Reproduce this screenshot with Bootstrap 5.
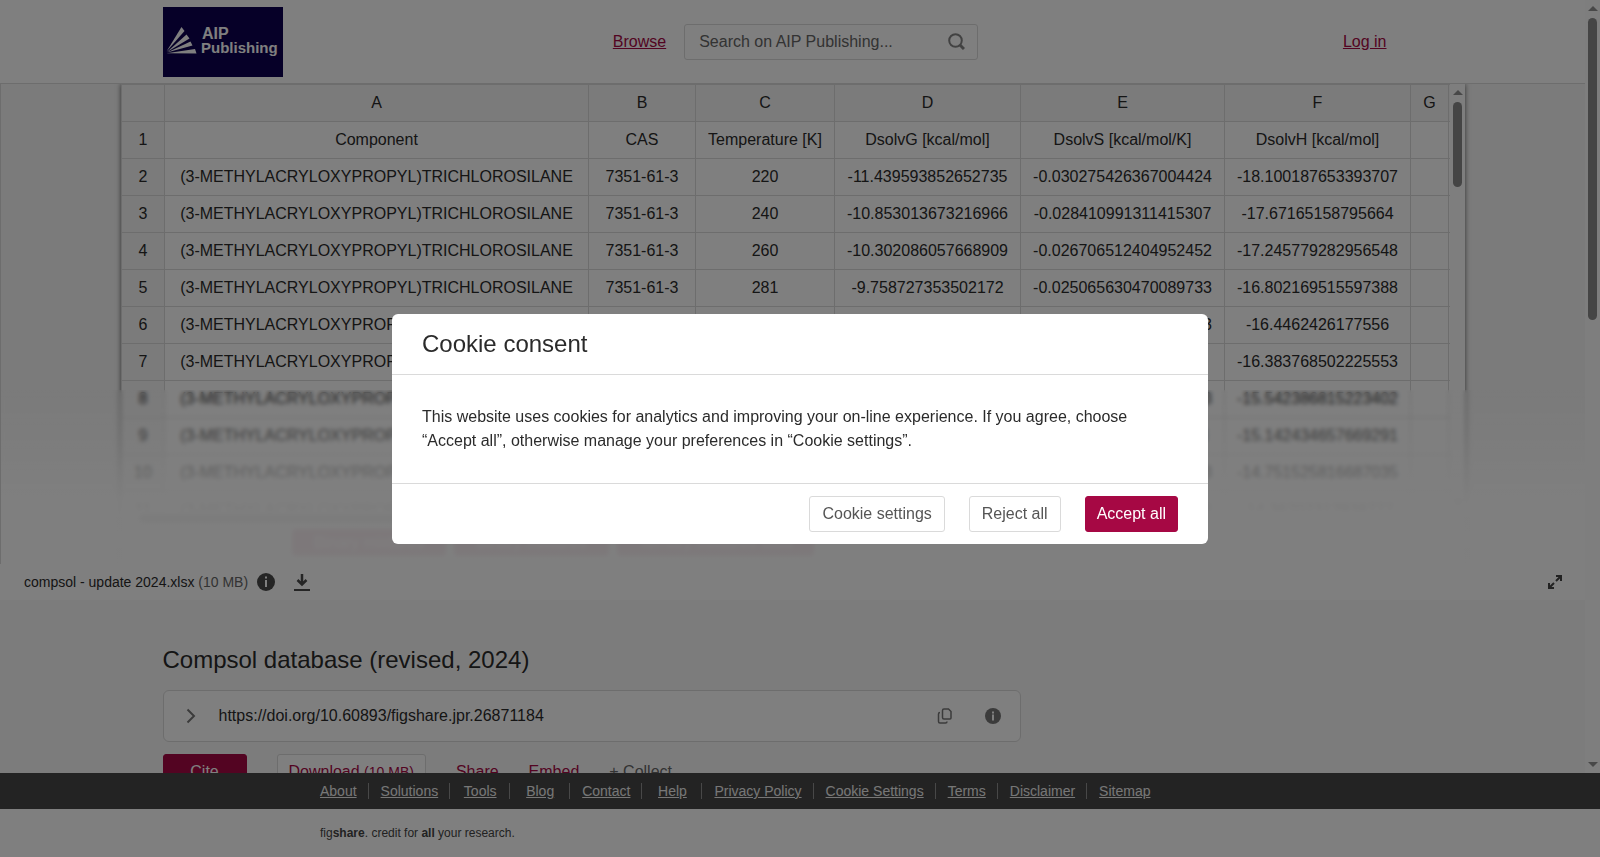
<!DOCTYPE html>
<html lang="en">
<head>
<meta charset="utf-8">
<meta name="viewport" content="width=device-width, initial-scale=1">
<title>Compsol database (revised, 2024)</title>
<link href="https://cdn.jsdelivr.net/npm/bootstrap@5.3.0/dist/css/bootstrap.min.css" rel="stylesheet">
<style>
:root{--accent:#a60844;--line:#dadada}
body{font-family:"Liberation Sans",Arial,sans-serif;font-size:16px;line-height:24px;color:#2b2b2b}
.accent-link{color:var(--accent)}
.muted{color:#666}
.page-inner{width:100%;max-width:1260px}
.page-head{border-bottom:1px solid var(--line)}
.head-grid{display:grid;grid-template-columns:1fr auto 1fr;align-items:center;height:83px}
.head-mid{gap:18px;padding-left:6px}
.login{padding-right:36px}
.search-box{width:294px;height:36px;border:1px solid var(--line);border-radius:3px;padding:0 12px 0 14px}
.search-box input{color:#2b2b2b}
.search-box input::placeholder{color:#666;opacity:1}
.btn{--bs-btn-border-radius:3px;--bs-btn-padding-x:12px;--bs-btn-padding-y:5px;line-height:24px}
.btn-plain{--bs-btn-color:#555;--bs-btn-bg:#fff;--bs-btn-border-color:var(--line)}
.btn-download{--bs-btn-color:var(--accent);--bs-btn-padding-x:11px}
.btn-accent{--bs-btn-color:#fff;--bs-btn-bg:var(--accent);--bs-btn-border-color:var(--accent);--bs-btn-padding-x:11px}
.icon-btn{border:0;background:none;padding:0;display:flex;color:#555}
/* scroll tracks */
.track{width:15px;flex:none;background:#fcfcfc;padding:6px 0}
.arrow-up,.arrow-down{border:5px solid transparent}
.arrow-up{border-top:0;border-bottom-color:#909090}
.arrow-down{border-bottom:0;border-top-color:#909090}
.thumb{width:9px;border-radius:5px;background:#8a8a8a;margin-top:7px}
.thumb-page{height:302px}
.thumb-sheet{height:85px}
/* spreadsheet preview */
.viewer{height:480px;background:#f6f6f6;border-left:1px solid var(--line)}
.sheet-box{width:85%;max-width:1344px;height:100%;background:#fff;box-shadow:0 0 5px rgba(0,0,0,.6)}
.sheet-pane{height:427px}
.sheet-table{table-layout:fixed;width:1366px;border-collapse:collapse}
.sheet-table th,.sheet-table td{border:1px solid var(--line);height:37px;padding:0;text-align:center;font-weight:400;white-space:nowrap}
.sheet-table th{background:#f6f6f6}
.c-num{width:43px}.c-a{width:424px}.c-b{width:107px}.c-c{width:139px}.c-d{width:186px}.c-e{width:204px}.c-f{width:186px}.c-g{width:38px}
.h-thumb{height:9px;border-radius:5px;background:#8a8a8a;width:60%;margin:3px 18px 6px}
.sheet-tabs{gap:8px;padding-left:171px}
.sheet-tabs button{height:27px;border:0;border-radius:4px;background:var(--accent);color:#fff;padding:0 22px}
.veil{bottom:0;left:0;right:0;height:174px;backdrop-filter:blur(2px);background:linear-gradient(rgba(255,255,255,.04),rgba(255,255,255,.36) 26%,rgba(255,255,255,.7) 47%,rgba(255,255,255,.94) 64%,rgba(255,255,255,.95))}
.file-bar{height:36px;font-size:14px;padding:0 23px 0 24px}
.item-area{background:#f9f9f9}
.item-area h1{font-size:24px;line-height:36px;margin:42px 0 12px}
.doi-box{max-width:858px;height:52px;border:1px solid var(--line);border-radius:6px;padding:0 19px 0 22px}
.doi-box .gap-doi{gap:23px}
.action-row{gap:30px;margin-top:12px}
.action-row .btn-accent{width:84px}
.foot-nav{background:#464646;font-size:14px}
.foot-inner{width:100%;max-width:984px}
.foot-nav li{min-width:60px;padding:0 11px 0 12px;line-height:16px;text-align:center;border-right:1px solid #909090}
.foot-nav li:last-child{border:0}
.foot-nav a{color:#eee}
.foot-credit{height:48px;font-size:12px;color:#444}
.foot-credit .foot-inner{padding-left:12px}
/* consent dialog */
.consent .modal-dialog{max-width:816px}
.consent .modal-content{border:0;border-radius:6px;color:#2b2b2b}
.consent .modal-header{height:61px;padding:0 30px;border-bottom:1px solid var(--line)}
.consent .modal-title{font-size:24px;line-height:36px;font-weight:400}
.consent .modal-body{padding:30px}
.consent .modal-footer{padding:12px 30px;gap:24px;border-top:1px solid var(--line)}
.consent .modal-footer .btn{margin:0}
</style>
</head>
<body class="vh-100 d-flex flex-column overflow-hidden">
<div class="d-flex flex-grow-1 overflow-hidden">
 <div class="flex-grow-1 overflow-hidden d-flex flex-column" style="min-width:0">
  <header class="page-head bg-white">
   <div class="page-inner head-grid mx-auto">
    <a href="#" aria-label="AIP Publishing" class="d-block lh-1">
     <svg width="120" height="70" viewBox="0 0 120 70" class="d-block"><rect width="120" height="70" fill="#0c0050"/>
      <g fill="#fff"><path d="M3.500 44.500 18.500 20 21.500 24z"/><path d="M4 45 23.500 27.500 26.500 31.500z"/><path d="M4 45.500 27.500 34.500 29.500 38.500z"/><path d="M3.500 46.300 32 42 33.500 46.500z"/>
      <text x="39" y="32" font-size="16" font-weight="700">AIP</text><text x="38" y="46" font-size="15" font-weight="700">Publishing</text></g></svg>
    </a>
    <div class="head-mid d-flex align-items-center">
     <a href="#" class="accent-link">Browse</a>
     <form class="search-box d-flex align-items-center">
      <input type="text" class="border-0 bg-transparent p-0 flex-grow-1" style="min-width:0" placeholder="Search on AIP Publishing..." aria-label="Search on AIP Publishing">
      <button type="button" class="icon-btn" aria-label="Search"><svg width="17" height="17" viewBox="0 0 17 17" fill="none" stroke="#858585" stroke-width="2"><circle cx="7.500" cy="7.500" r="6.300"/><path d="M12 12l4 4" stroke-width="3"/></svg></button>
     </form>
    </div>
    <div class="login text-end"><a href="#" class="accent-link">Log in</a></div>
   </div>
  </header>
  <main class="d-flex flex-column flex-grow-1">
   <section class="viewer position-relative overflow-hidden flex-shrink-0">
    <div class="sheet-box mx-auto">
     <div class="sheet-pane d-flex overflow-hidden">
      <div class="flex-grow-1 overflow-hidden" style="min-width:0">
       <table class="sheet-table">
        <colgroup><col class="c-num"><col class="c-a"><col class="c-b"><col class="c-c"><col class="c-d"><col class="c-e"><col class="c-f"><col class="c-g"><col></colgroup>
        <thead><tr><th></th><th>A</th><th>B</th><th>C</th><th>D</th><th>E</th><th>F</th><th>G</th><th></th></tr></thead>
        <tbody>
        <tr><th>1</th><td>Component</td><td>CAS</td><td>Temperature [K]</td><td>DsolvG [kcal/mol]</td><td>DsolvS [kcal/mol/K]</td><td>DsolvH [kcal/mol]</td><td></td><td></td></tr>
        <tr><th>2</th><td>(3-METHYLACRYLOXYPROPYL)TRICHLOROSILANE</td><td>7351-61-3</td><td>220</td><td>-11.439593852652735</td><td>-0.030275426367004424</td><td>-18.100187653393707</td><td></td><td></td></tr>
        <tr><th>3</th><td>(3-METHYLACRYLOXYPROPYL)TRICHLOROSILANE</td><td>7351-61-3</td><td>240</td><td>-10.853013673216966</td><td>-0.028410991311415307</td><td>-17.67165158795664</td><td></td><td></td></tr>
        <tr><th>4</th><td>(3-METHYLACRYLOXYPROPYL)TRICHLOROSILANE</td><td>7351-61-3</td><td>260</td><td>-10.302086057668909</td><td>-0.026706512404952452</td><td>-17.245779282956548</td><td></td><td></td></tr>
        <tr><th>5</th><td>(3-METHYLACRYLOXYPROPYL)TRICHLOROSILANE</td><td>7351-61-3</td><td>281</td><td>-9.758727353502172</td><td>-0.025065630470089733</td><td>-16.802169515597388</td><td></td><td></td></tr>
        <tr><th>6</th><td>(3-METHYLACRYLOXYPROPYL)TRICHLOROSILANE</td><td>7351-61-3</td><td>298</td><td>-9.343514251106921</td><td>-0.023834658143528863</td><td>-16.4462426177556</td><td></td><td></td></tr>
        <tr><th>7</th><td>(3-METHYLACRYLOXYPROPYL)TRICHLOROSILANE</td><td>7351-61-3</td><td>301</td><td>-9.272330418276315</td><td>-0.02362603350481475</td><td>-16.383768502225553</td><td></td><td></td></tr>
        <tr><th>8</th><td>(3-METHYLACRYLOXYPROPYL)TRICHLOROSILANE</td><td>7351-61-3</td><td>341</td><td>-8.382146205513824</td><td>-0.020997773048415183</td><td>-15.542386815223402</td><td></td><td></td></tr>
        <tr><th>9</th><td>(3-METHYLACRYLOXYPROPYL)TRICHLOROSILANE</td><td>7351-61-3</td><td>361</td><td>-7.973722140635814</td><td>-0.01985792940452763</td><td>-15.142434657669291</td><td></td><td></td></tr>
        <tr><th>10</th><td>(3-METHYLACRYLOXYPROPYL)TRICHLOROSILANE</td><td>7351-61-3</td><td>381</td><td>-7.587322160318427</td><td>-0.018803685450810003</td><td>-14.751525816687035</td><td></td><td></td></tr>
        <tr><th>11</th><td>(3-METHYLACRYLOXYPROPYL)TRICHLOROSILANE</td><td>7351-61-3</td><td>401</td><td>-7.221163021530948</td><td>-0.017830714922710883</td><td>-14.36702312938777</td><td></td><td></td></tr>
        </tbody>
       </table>
      </div>
      <div class="track d-flex flex-column align-items-center"><div class="arrow-up"></div><div class="thumb thumb-sheet"></div><div class="arrow-down mt-auto"></div></div>
     </div>
     <div class="h-thumb"></div>
     <div class="sheet-tabs d-flex"><button type="button">Binary mixtures</button><button type="button">Binary mixtures</button><button type="button">Ternary mixtures data</button></div>
    </div>
    <div class="veil position-absolute"></div>
   </section>
   <div class="file-bar d-flex align-items-center bg-white flex-shrink-0">
    <span>compsol - update 2024.xlsx <span class="muted">(10 MB)</span></span>
    <button type="button" class="icon-btn ms-2" aria-label="File details"><svg width="20" height="20" viewBox="0 0 20 20"><circle cx="10" cy="10" r="9" fill="#4a4a4a"/><path d="M9 4.500h2v2H9zM9 8h2v7H9z" fill="#fff"/></svg></button>
    <button type="button" class="icon-btn ms-3" aria-label="Download file"><svg width="20" height="20" viewBox="0 0 20 20" fill="none" stroke="#4a4a4a"><path d="M10 2v10M5.500 8 10 12.500 14.500 8" stroke-width="2.500"/><path d="M2 18h16" stroke-width="2"/></svg></button>
    <button type="button" class="icon-btn ms-auto" aria-label="Full screen"><svg width="14" height="14" viewBox="0 0 14 14" fill="none" stroke="#444" stroke-width="2"><path d="M8 1h5v5M13 1 8 6M1 8v5h5M1 13l5-5"/></svg></button>
   </div>
   <section class="item-area flex-grow-1">
    <div class="page-inner mx-auto">
     <h1 class="fw-normal pt-0 overflow-hidden">Compsol database (revised, 2024)</h1>
     <div class="doi-box bg-white d-flex align-items-center">
      <div class="gap-doi d-flex align-items-center">
       <button type="button" class="icon-btn" aria-label="Show versions"><svg width="10" height="16" viewBox="0 0 10 16" fill="none" stroke="#777" stroke-width="2"><path d="M1.500 1.500 8 8l-6.500 6.500"/></svg></button>
       <span>https://doi.org/10.60893/figshare.jpr.26871184</span>
      </div>
      <div class="d-flex ms-auto" style="gap:32px">
       <button type="button" class="icon-btn" aria-label="Copy DOI"><svg width="16" height="16" viewBox="0 0 16 16" fill="none" stroke="#777" stroke-width="1.500"><path d="M7 1h4.500L14 3.500V10a1 1 0 0 1-1 1H7a1.500 1.500 0 0 1-1.500-1.500v-7A1.500 1.500 0 0 1 7 1z"/><path d="M3 4.500a1.500 1.500 0 0 0-1.500 1.500v7.500A1.500 1.500 0 0 0 3 15h5.500a1.500 1.500 0 0 0 1.500-1.500"/></svg></button>
       <button type="button" class="icon-btn" aria-label="About this DOI"><svg width="16" height="16" viewBox="0 0 16 16"><circle cx="8" cy="8" r="8" fill="#777"/><path d="M7 3.500h2v2H7zM7 6.500h2v6H7z" fill="#fff"/></svg></button>
      </div>
     </div>
     <div class="action-row d-flex align-items-center">
      <button type="button" class="btn btn-accent">Cite</button>
      <button type="button" class="btn btn-plain btn-download text-nowrap">Download <small>(10 MB)</small></button>
      <a href="#" class="accent-link text-decoration-none">Share</a>
      <a href="#" class="accent-link text-decoration-none">Embed</a>
      <a href="#" class="muted text-decoration-none">+ Collect</a>
     </div>
    </div>
   </section>
  </main>
 </div>
 <div class="track d-flex flex-column align-items-center"><div class="arrow-up"></div><div class="thumb thumb-page"></div><div class="arrow-down mt-auto"></div></div>
</div>
<footer class="flex-shrink-0">
 <nav class="foot-nav" aria-label="Footer">
  <ul class="foot-inner list-unstyled d-flex mx-auto mb-0 py-2 align-items-center" style="height:36px">
   <li><a href="#">About</a></li><li><a href="#">Solutions</a></li><li><a href="#">Tools</a></li><li><a href="#">Blog</a></li><li><a href="#">Contact</a></li><li><a href="#">Help</a></li><li><a href="#">Privacy Policy</a></li><li><a href="#">Cookie Settings</a></li><li><a href="#">Terms</a></li><li><a href="#">Disclaimer</a></li><li><a href="#">Sitemap</a></li>
  </ul>
 </nav>
 <div class="foot-credit bg-white d-flex align-items-center"><div class="foot-inner mx-auto">fig<b>share</b>. credit for <b>all</b> your research.</div></div>
</footer>
<div class="modal-backdrop show"></div>
<div class="modal d-block consent" tabindex="-1" role="dialog" aria-modal="true" aria-labelledby="consent-title">
 <div class="modal-dialog modal-dialog-centered">
  <div class="modal-content">
   <div class="modal-header"><h2 class="modal-title" id="consent-title">Cookie consent</h2></div>
   <div class="modal-body"><p class="mb-0">This website uses cookies for analytics and improving your on-line experience. If you agree, choose “Accept all”, otherwise manage your preferences in “Cookie settings”.</p></div>
   <div class="modal-footer"><button type="button" class="btn btn-plain">Cookie settings</button><button type="button" class="btn btn-plain">Reject all</button><button type="button" class="btn btn-accent">Accept all</button></div>
  </div>
 </div>
</div>
<script src="https://cdn.jsdelivr.net/npm/bootstrap@5.3.0/dist/js/bootstrap.bundle.min.js"></script>
</body>
</html>
